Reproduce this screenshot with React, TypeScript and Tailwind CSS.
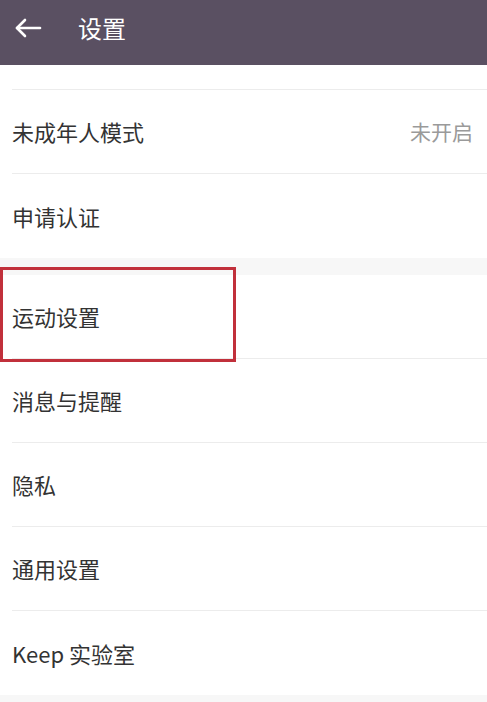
const rowText = "text-[22px] text-[#333333]"

function Row({ label, value, divider = true }: { label: string; value?: string; divider?: boolean }) {
  return (
    <div className="pl-3">
      <div className={`flex h-[84px] items-center justify-between pr-[14px] ${divider ? "border-b border-[#ececec]" : ""}`}>
        <span className={rowText}>{label}</span>
        {value && <span className="text-[21px] text-[#9a9a9a]">{value}</span>}
      </div>
    </div>
  )
}

export default function App() {
  return (
    <div className="relative min-h-[702px] w-[487px] overflow-hidden bg-[#f7f7f7] font-['Noto_Sans_CJK_SC','Noto_Sans',sans-serif]">
      {/* header */}
      <div className="flex h-[65px] items-center bg-[#5a5062] pb-[10px] pl-[14px]">
        <svg width="28" height="22" viewBox="0 0 28 22" fill="none" stroke="white" strokeWidth="2.6" strokeLinecap="round" strokeLinejoin="round">
          <path d="M26 11H3" />
          <path d="M11 3L3 11l8 8" />
        </svg>
        <span className="ml-[36px] text-[24px] text-white">设置</span>
      </div>

      {/* first group */}
      <div className="bg-white">
        <div className="pl-3">
          <div className="h-[25px] border-b border-[#ececec]" />
        </div>
        <Row label="未成年人模式" value="未开启" />
        <Row label="申请认证" divider={false} />
      </div>

      <div className="h-[17px]" />

      {/* second group */}
      <div className="bg-white">
        <Row label="运动设置" />
        <Row label="消息与提醒" />
        <Row label="隐私" />
        <Row label="通用设置" />
        <Row label="Keep 实验室" divider={false} />
      </div>

      {/* annotation box */}
      <div className="absolute left-0 top-[267px] h-[95px] w-[236px] border-[3px] border-[#c1303b]" />
    </div>
  )
}
